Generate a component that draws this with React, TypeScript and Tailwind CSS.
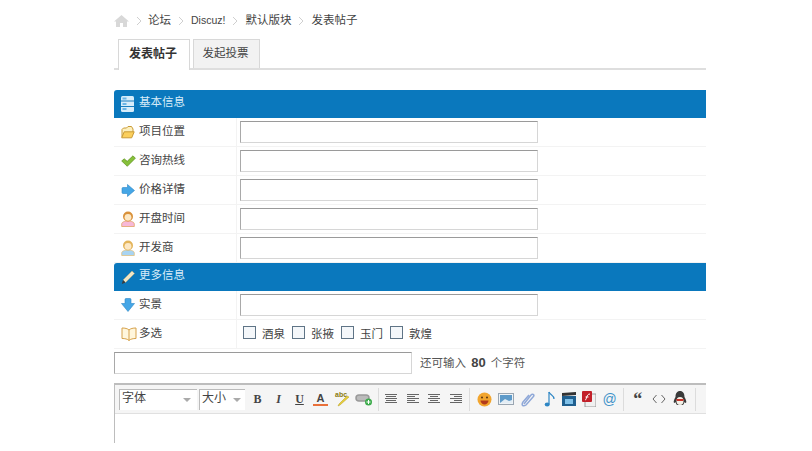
import type { ReactNode } from 'react'

const FONT = 'font-["Liberation_Sans","Noto_Sans_CJK_SC",sans-serif]'

const Sep = () => (
  <svg width="6" height="10" viewBox="0 0 6 10" className="mx-[7px]">
    <path d="M1 1l4 4-4 4" fill="none" stroke="#cfcfcf" strokeWidth="1" />
  </svg>
)

// --- row icons ---
const FolderIcon = () => (
  <svg width="14" height="14" viewBox="0 0 14 14">
    <path d="M1 12V4.500L2.500 3h3L7 1.500h3.500L12 4v3" fill="#fdf0bd" stroke="#c99a35" />
    <path d="M.7 12.800l2.500-6h10l-2.500 6z" fill="#fbcf5c" stroke="#c99a35" />
  </svg>
)
const CheckIcon = () => (
  <svg width="15" height="12" viewBox="0 0 15 12">
    <path d="M.7 6l2.500-2.200 3 2.500L12 .8l2.400 2.400L6.300 11.300z" fill="#86c03a" stroke="#5b8f1d" strokeWidth=".7" />
  </svg>
)
const ArrowRightIcon = () => (
  <svg width="14" height="15" viewBox="0 0 14 15">
    <path d="M1 5.500q0-1 1-1h4.500V1.500L13.500 7.500l-7 6v-3H2q-1 0-1-1z" fill="#45a6e6" stroke="#2c86c6" strokeWidth=".6" />
  </svg>
)
const ArrowDownIcon = () => (
  <svg width="14" height="14" viewBox="0 0 14 14">
    <path d="M4 1.500q0-1 1-1h4q1 0 1 1V5.500h3.500L7 13.500.5 5.500H4z" fill="#45a6e6" stroke="#2c86c6" strokeWidth=".6" />
  </svg>
)
const UserIcon = ({ hair, body }: { hair: string; body: string }) => (
  <svg width="14" height="16" viewBox="0 0 14 16">
    <path d="M.7 15.500v-2.500c0-2 3-3 6.300-3s6.300 1 6.300 3v2.500z" fill={body} stroke={hair} strokeWidth=".6" />
    <circle cx="7" cy="5.500" r="5" fill={hair} />
    <circle cx="7" cy="6.300" r="3.400" fill="#fde8c4" />
  </svg>
)
const BookIcon = () => (
  <svg width="16" height="14" viewBox="0 0 16 14">
    <path d="M8 3C6.500 1.500 4 1 1 1v10.500c3 0 5.500.5 7 2 1.500-1.500 4-2 7-2V1c-3 0-5.500.5-7 2zM8 3v10.500" fill="#fff6dc" stroke="#d6a14a" />
  </svg>
)
const ServerIcon = () => (
  <svg width="13" height="16" viewBox="0 0 13 16">
    <rect x="0" y="0" width="13" height="16" rx="1.500" fill="#d6ecfa" />
    <path d="M0 5h13M0 10.500h13" stroke="#1a7fc0" />
    <rect x="1.500" y="1.500" width="4" height="2" fill="#6ab5e6" />
    <rect x="1.500" y="7" width="4" height="2" fill="#6ab5e6" />
    <rect x="1.500" y="12" width="4" height="2" fill="#6ab5e6" />
  </svg>
)
const PencilIcon = () => (
  <svg width="14" height="15" viewBox="0 0 14 15">
    <path d="M11 1l2.500 2.500L4.500 12.500 2 10z" fill="#f3e6c4" stroke="#b9a878" strokeWidth=".5" />
    <path d="M2 10l2.500 2.500L.8 14z" fill="#3a3a3a" />
  </svg>
)

// --- toolbar icons ---
const AlignIcon = ({ lines }: { lines: number[][] }) => (
  <svg width="12" height="12" viewBox="0 0 12 12">
    {lines.map(([x, w], i) => (
      <rect key={i} x={x} y={i * 2 + 1} width={w} height="1" fill="#666" />
    ))}
  </svg>
)

const TextBtn = ({ children, className }: { children: ReactNode; className: string }) => (
  <span className={`w-[21px] text-center text-[12px] font-bold text-[#444] font-["Liberation_Serif",serif] ${className}`}>{children}</span>
)

const ToolSep = ({ className = 'mx-[6px]' }: { className?: string }) => <div className={`h-[23px] w-px bg-[#dcdcdc] ${className}`} />

const Row = ({ icon, label, children }: { icon: ReactNode; label: string; children: ReactNode }) => (
  <div className="flex h-[29px] border-b border-[#f3f3f3]">
    <div className="flex w-[123px] items-center border-r border-[#f3f3f3] pl-[7px]">
      <span className="flex w-[18px] justify-start">{icon}</span>
      <span className="pb-[1px] text-[11.5px] text-[#444]">{label}</span>
    </div>
    <div className="flex items-center pl-[3px]">{children}</div>
  </div>
)

const Input = () => (
  <div className="h-[22px] w-[298px] border border-[#d6d6d6] border-l-[#a9a9a9] border-t-[#9a9a9a] bg-white" />
)

const SectionBar = ({ icon, label }: { icon: ReactNode; label: string }) => (
  <div className="flex h-[28px] items-center rounded-tl-[3px] bg-[#0a78bd] pl-[7px]">
    <span className="flex w-[18px]">{icon}</span>
    <span className="pb-[2px] text-[11.5px] text-[#d8ecf8]">{label}</span>
  </div>
)

const Check = ({ label }: { label: string }) => (
  <label className="mr-[7px] flex items-center">
    <span className="mb-[3px] h-[13px] w-[13px] border border-[#5f7486] bg-[#f4f7fa]" />
    <span className="mt-[1px] ml-[6px] w-[23px] text-[11.5px] text-[#444]">{label}</span>
  </label>
)

export default function App() {
  return (
    <div className={`h-[451px] w-[812px] overflow-hidden bg-white pl-[114px] ${FONT}`}>
      <div className="w-[592px]">
        {/* breadcrumb */}
        <div className="flex h-[39px] items-center pt-[2px] text-[11.5px] text-[#444]">
          <svg width="15" height="12" viewBox="0 0 15 12">
            <path d="M7.500 0L15 6.500h-2V12H9V8H6v4H2V6.500H0z" fill="#d8d8d8" />
          </svg>
          <Sep />
          <span className="-ml-px">论坛</span>
          <Sep />
          <span className="text-[10.5px]">Discuz!</span>
          <Sep />
          <span>默认版块</span>
          <Sep />
          <span>发表帖子</span>
        </div>

        {/* tabs */}
        <div className="flex h-[31px] border-b-2 border-[#dedede] pl-[4px]">
          <div className="z-10 -mb-[2px] flex h-[31px] w-[72px] items-center justify-center border border-b-0 border-[#d8d8d8] bg-white pb-[2px] pr-[2px] text-[12px] font-bold text-[#333]">
            发表帖子
          </div>
          <div className="ml-[3px] flex h-[29px] w-[67px] items-center justify-center border border-b-0 border-[#d8d8d8] bg-[#f2f2f2] pr-[2px] text-[11.5px] text-[#444]">
            发起投票
          </div>
        </div>

        <div className="mt-[20px]">
          <SectionBar icon={<ServerIcon />} label="基本信息" />
          <Row icon={<FolderIcon />} label="项目位置"><Input /></Row>
          <Row icon={<CheckIcon />} label="咨询热线"><Input /></Row>
          <Row icon={<ArrowRightIcon />} label="价格详情"><Input /></Row>
          <Row icon={<UserIcon hair="#d9913a" body="#f7b8d8" />} label="开盘时间"><Input /></Row>
          <Row icon={<UserIcon hair="#e3b45a" body="#a8d4f2" />} label="开发商"><Input /></Row>
          <SectionBar icon={<PencilIcon />} label="更多信息" />
          <Row icon={<ArrowDownIcon />} label="实景"><Input /></Row>
          <Row icon={<BookIcon />} label="多选">
            <div className="flex pl-[3px]">
              <Check label="酒泉" />
              <Check label="张掖" />
              <Check label="玉门" />
              <Check label="敦煌" />
            </div>
          </Row>
        </div>

        {/* subject */}
        <div className="mt-[3px] flex items-center">
          <div className="h-[22px] w-[298px] border border-[#d6d6d6] border-l-[#a9a9a9] border-t-[#9a9a9a] bg-white" />
          <span className="ml-[8px] text-[11.5px] text-[#555]">
            还可输入 <b className="mx-[2px] text-[13px] text-[#444]">80</b> 个字符
          </span>
        </div>

        {/* editor */}
        <div className="mt-[9px] h-[60px] border-t-2 border-l border-[#bdbdbd]">
          <div className="flex h-[29px] items-center border-b border-[#e0e0e0] bg-[#f5f5f5] pl-[4px]">
            <div className="flex h-[21px] w-[78px] items-start justify-between border-t border-l border-[#bbb] bg-white pl-[2px] text-[12px] leading-[16px] text-[#444]">
              字体
              <span className="mt-[8px] mr-[6px] border-x-[4px] border-t-[4px] border-x-transparent border-t-[#aaa]" />
            </div>
            <div className="ml-[2px] flex h-[21px] w-[46px] items-start justify-between border-t border-l border-[#bbb] bg-white pl-[2px] text-[12px] leading-[16px] text-[#444]">
              大小
              <span className="mt-[8px] mr-[4px] border-x-[4px] border-t-[4px] border-x-transparent border-t-[#aaa]" />
            </div>
            <div className="ml-[2px] flex items-center">
              <TextBtn className="">B</TextBtn>
              <TextBtn className="italic">I</TextBtn>
              <TextBtn className="underline">U</TextBtn>
              <span className="flex w-[21px] flex-col items-center text-[11px] leading-[11px] font-bold text-[#444]">
                A<span className="h-[2px] w-[15px] bg-[#e9703a]" />
              </span>
              <svg width="18" height="16" viewBox="0 0 18 16" className="ml-[3px]">
                <text x="1" y="6" fontSize="7" fontWeight="bold" fill="#8a7a10">abc</text>
                <path d="M15 6L6 14l-2 1 1-2 8-8z" fill="#e8cf3a" stroke="#b79d1e" strokeWidth=".5" />
              </svg>
              <svg width="18" height="14" viewBox="0 0 18 14" className="ml-[3px]">
                <rect x="1" y="3" width="13" height="6" rx="3" fill="#bbb" stroke="#999" strokeWidth="1.500" />
                <circle cx="13.500" cy="10" r="3.500" fill="#3cab4b" />
                <path d="M11.500 10h4M13.500 8v4" stroke="#fff" strokeWidth="1" />
              </svg>
            </div>
            <ToolSep className="mr-[6px] ml-[5px]" />
            <div className="flex gap-[9.500px]">
              <AlignIcon lines={[[0, 12], [1, 10], [0, 12], [1, 10], [0, 12]]} />
              <AlignIcon lines={[[0, 12], [0, 8], [0, 12], [0, 8], [0, 12]]} />
              <AlignIcon lines={[[0, 12], [2, 8], [0, 12], [2, 8], [0, 12]]} />
              <AlignIcon lines={[[0, 12], [4, 8], [0, 12], [4, 8], [0, 12]]} />
            </div>
            <ToolSep className="mr-[7px] ml-[7px]" />
            <div className="flex items-center gap-[6px]">
              <svg width="15" height="15" viewBox="0 0 15 15">
                <circle cx="7.500" cy="7.500" r="7" fill="#f2a52e" />
                <circle cx="5" cy="5.500" r="1" fill="#5a3410" />
                <circle cx="10" cy="5.500" r="1" fill="#5a3410" />
                <path d="M3.500 8.500h8c0 2-2 4-4 4s-4-2-4-4z" fill="#b23a1c" />
              </svg>
              <svg width="16" height="12" viewBox="0 0 16 12">
                <rect x=".5" y=".5" width="15" height="11" fill="#eef3f7" stroke="#9aa6b2" />
                <rect x="2" y="2" width="12" height="8" fill="#5d9ac9" />
                <path d="M2 10l5-4 4 2 3-1v3z" fill="#e3edf5" />
              </svg>
              <svg width="15" height="16" viewBox="0 0 15 16">
                <path d="M4 13L11 4c2-2 4 0 2 2l-7 8c-3 2-5 0-3-3l6-7" fill="none" stroke="#8fa8d8" strokeWidth="1.500" />
              </svg>
              <svg width="12" height="17" viewBox="0 0 12 17" className="ml-[3px]">
                <path d="M5 1v12" stroke="#2e86c4" strokeWidth="1.200" />
                <path d="M5 1c1 3 5 3 5 7" fill="none" stroke="#2e86c4" strokeWidth="1.200" />
                <ellipse cx="3.200" cy="13.500" rx="2.500" ry="2" fill="#2e86c4" />
              </svg>
              <svg width="14" height="14" viewBox="0 0 14 14">
                <rect x="0" y="4" width="14" height="10" fill="#1f5f8f" />
                <path d="M0 1l14-1v3L0 4z" fill="#333" />
                <rect x="3" y="7" width="8" height="5" fill="#7fc0e8" />
              </svg>
              <svg width="14" height="16" viewBox="0 0 14 16">
                <rect x="3" y="3" width="11" height="13" fill="#f0f0f0" stroke="#999" />
                <rect x="0" y="0" width="10" height="11" rx="1" fill="#c2202a" />
                <path d="M3 9c2 0 1-6 5-6M3.500 6h3" fill="none" stroke="#fff" strokeWidth="1" />
              </svg>
              <span className="ml-[1px] text-[14px] leading-none text-[#3f93c9]">@</span>
            </div>
            <ToolSep className="mr-[7px] ml-[6px]" />
            <div className="flex items-center gap-[7px]">
              <span className="w-[14px] text-center font-['Liberation_Serif',serif] text-[18px] leading-[12px] font-bold text-[#444]">“</span>
              <svg width="14" height="10" viewBox="0 0 14 10">
                <path d="M4.500 1L1 5l3.500 4M9.500 1L13 5l-3.500 4" fill="none" stroke="#666" />
              </svg>
              <svg width="14" height="16" viewBox="0 0 14 16">
                <path d="M7 0c3 0 4.500 2.500 4.500 6 1 2 2.500 4.500 1.500 6-1 0-1.500-1-1.500-1-.5 2-1.500 3-1.500 3H4s-1-1-1.500-3c0 0-.5 1-1.500 1-1-1.500.5-4 1.500-6C2.500 2.500 4 0 7 0z" fill="#3a3a3a" />
                <ellipse cx="7" cy="10" rx="3.500" ry="4" fill="#f3f0e6" />
                <path d="M3 8h8l-1 2H4z" fill="#c9342a" />
              </svg>
            </div>
            <ToolSep className="ml-[8px]" />
          </div>
        </div>
      </div>
    </div>
  )
}
